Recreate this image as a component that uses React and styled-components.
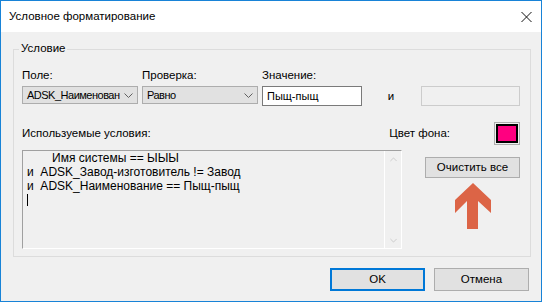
import React from "react";
import styled, { createGlobalStyle } from "styled-components";

const GlobalStyle = createGlobalStyle`
  * { box-sizing: border-box; }
  body {
    margin: 0;
    background: #ffffff;
    font-family: "Liberation Sans", Arial, sans-serif;
    font-size: 11.5px;
    color: #000;
  }
`;

const Window = styled.div`
  width: 542px;
  height: 302px;
  border: 1px solid #1883d7;
  display: flex;
  flex-direction: column;
`;

const TitleBar = styled.div`
  height: 31px;
  background: #ffffff;
  display: flex;
  align-items: center;
  justify-content: space-between;
  padding: 0 9px 0 8px;
`;

const Title = styled.span`
  font-size: 11.5px;
  line-height: 16px;
  margin-top: -1px;
`;

const Body = styled.div`
  flex: 1;
  background: #f0f0f0;
  padding: 17px 10px 0 12px;
`;

const GroupBox = styled.div`
  position: relative;
  height: 208px;
  border: 1px solid #dcdcdc;
  padding: 18px 10px 0 8px;
`;

const Legend = styled.span`
  position: absolute;
  top: -9px;
  left: 5px;
  padding: 0 2px;
  background: #f0f0f0;
  line-height: 15px;
`;

const Row = styled.div`
  display: flex;
  align-items: ${(p) => p.$align || "flex-start"};
  margin-top: ${(p) => p.$top || 0}px;
`;

const Field = styled.div`
  display: flex;
  flex-direction: column;
  width: ${(p) => p.$width}px;
  margin-right: ${(p) => p.$gap || 0}px;
`;

const Label = styled.span`
  line-height: 15px;
  height: 15px;
  margin-bottom: ${(p) => p.$below || 0}px;
  white-space: nowrap;
`;

const Combo = styled.div`
  height: 18px;
  border: 1px solid #adadad;
  background: #e1e1e1;
  display: flex;
  align-items: center;
  justify-content: space-between;
  padding: 0 4px 0 4px;
  font-size: 11px;
  letter-spacing: -0.5px;
  overflow: hidden;
  white-space: nowrap;
`;

const TextBox = styled.div`
  height: 20px;
  border: 1px solid ${(p) => (p.$disabled ? "#cccccc" : "#7a7a7a")};
  background: ${(p) => (p.$disabled ? "#f0f0f0" : "#ffffff")};
  padding: 0 4px;
  line-height: 18px;
  font-size: 11px;
  margin-top: ${(p) => p.$top || 0}px;
`;

const And = styled.span`
  width: 59px;
  text-align: center;
  margin-top: 18px;
  line-height: 20px;
  padding-right: 1px;
`;

const Grow = styled.span`
  flex: 1;
  line-height: 15px;
`;

const Swatch = styled.div`
  width: 26px;
  height: 23px;
  margin-left: 44px;
  border: 1px solid #adadad;
  padding: 1px;
  background: #f0f0f0;
`;

const SwatchFill = styled.div`
  width: 100%;
  height: 100%;
  border: 2px solid #000;
  background: #ff0080;
`;

const Conditions = styled.div`
  width: 380px;
  height: 99px;
  border-top: 1px solid #a0a0a0;
  border-left: 1px solid #a0a0a0;
  border-right: 1px solid #ffffff;
  border-bottom: 1px solid #ffffff;
  background: #f0f0f0;
  display: flex;
`;

const ConditionText = styled.div`
  flex: 1;
  padding: 0 0 0 4px;
  font-size: 12px;
  line-height: 14px;
`;

const Line = styled.div`
  padding-left: ${(p) => p.$indent || 0}px;
  white-space: pre;
`;

const Caret = styled.div`
  width: 1px;
  height: 12px;
  background: #000;
  margin: 1px 0 0 0;
`;

const ScrollBar = styled.div`
  width: 17px;
  border-left: 1px solid #ffffff;
  display: flex;
  flex-direction: column;
  justify-content: space-between;
  align-items: center;
  padding: 6px 0 5px;
`;

const Side = styled.div`
  width: 95px;
  margin-left: 23px;
  display: flex;
  flex-direction: column;
  align-items: center;
`;

const Button = styled.button`
  width: 95px;
  height: ${(p) => p.$h || 23}px;
  margin-top: ${(p) => p.$top || 0}px;
  border: ${(p) => (p.$primary ? "2px solid #0078d7" : "1px solid #adadad")};
  background: #e1e1e1;
  font-family: "Liberation Sans", Arial, sans-serif;
  font-size: 11.5px;
  color: #000;
  padding: 0;
  line-height: 1;
`;

const Footer = styled.div`
  display: flex;
  justify-content: flex-end;
  gap: 9px;
  padding: 11px 2px 0 0;
`;

const Chevron = ({ down = true, color = "#606060", w = 9, h = 5 }) => (
  <svg width={w} height={h} viewBox="0 0 9 5">
    <polyline
      points={down ? "0.5,0.5 4.5,4.5 8.5,0.5" : "0.5,4.5 4.5,0.5 8.5,4.5"}
      fill="none"
      stroke={color}
      strokeWidth="1"
    />
  </svg>
);

const Arrow = styled.svg`
  margin-top: 5px;
`;

export default function App() {
  return (
    <>
      <GlobalStyle />
      <Window>
        <TitleBar>
          <Title>Условное форматирование</Title>
          <svg width="11" height="10" viewBox="0 0 11 10">
            <path d="M0.5 0 L10.5 10 M10.5 0 L0.5 10" stroke="#111" strokeWidth="1" />
          </svg>
        </TitleBar>
        <Body>
          <GroupBox>
            <Legend>Условие</Legend>
            <Row>
              <Field $width={116} $gap={4}>
                <Label $below={3}>Поле:</Label>
                <Combo>
                  <span>ADSK_Наименован</span>
                  <Chevron />
                </Combo>
              </Field>
              <Field $width={116} $gap={4}>
                <Label $below={3}>Проверка:</Label>
                <Combo>
                  <span>Равно</span>
                  <Chevron />
                </Combo>
              </Field>
              <Field $width={100}>
                <Label $below={3}>Значение:</Label>
                <TextBox>Пыщ-пыщ</TextBox>
              </Field>
              <And>и</And>
              <Field $width={99}>
                <TextBox $disabled $top={18} />
              </Field>
            </Row>
            <Row $align="center" $top={16}>
              <Grow>Используемые условия:</Grow>
              <Label>Цвет фона:</Label>
              <Swatch>
                <SwatchFill />
              </Swatch>
            </Row>
            <Row $top={5}>
              <Conditions>
                <ConditionText>
                  <Line $indent={25}>Имя системы == ЫЫЫ</Line>
                  <Line>и  ADSK_Завод-изготовитель != Завод</Line>
                  <Line>и  ADSK_Наименование == Пыщ-пыщ</Line>
                  <Caret />
                </ConditionText>
                <ScrollBar>
                  <Chevron down={false} color="#c2c2c2" w={7} h={5} />
                  <Chevron color="#c2c2c2" w={7} h={5} />
                </ScrollBar>
              </Conditions>
              <Side>
                <Button $top={7} $h={21}>Очистить все</Button>
                <Arrow width="36" height="46" viewBox="0 0 36 46">
                  <polygon
                    points="18,0 36,17 36,30 23,18 23,46 12,46 12,18 0,30 0,17"
                    fill="#dc6446"
                  />
                </Arrow>
              </Side>
            </Row>
          </GroupBox>
          <Footer>
            <Button $primary>OK</Button>
            <Button>Отмена</Button>
          </Footer>
        </Body>
      </Window>
    </>
  );
}
